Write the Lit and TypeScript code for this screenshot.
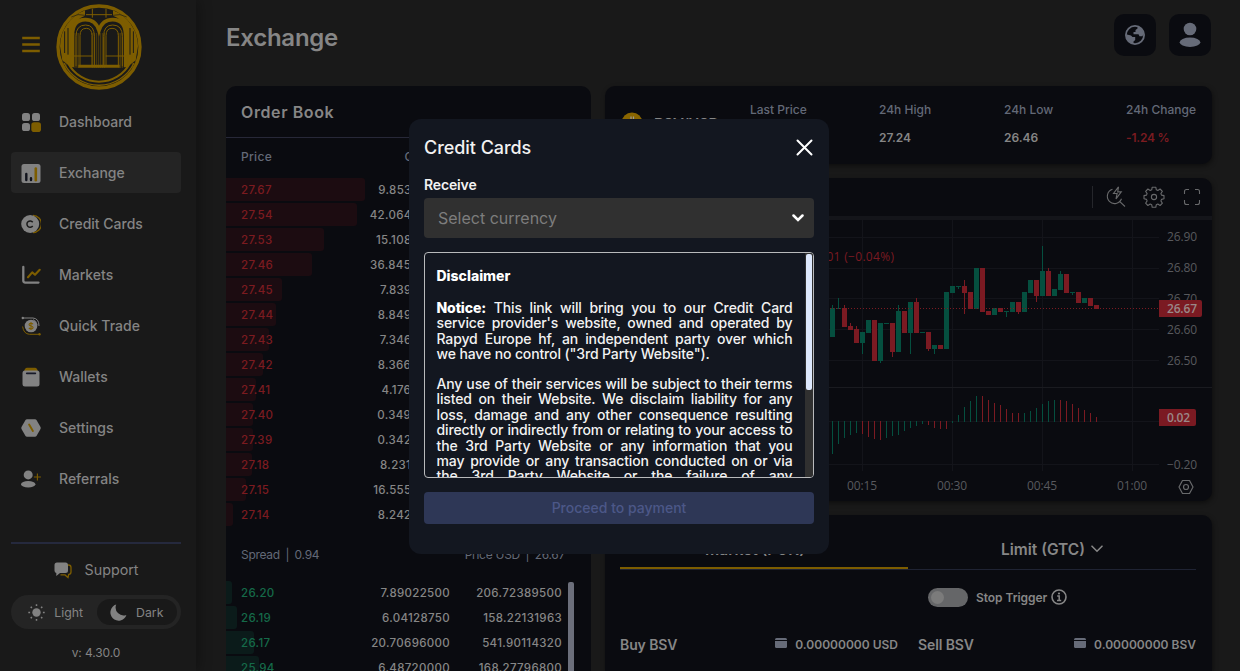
import { LitElement, html, svg, css } from "lit";
import { customElement, property } from "lit/decorators.js";

type Candle = [string, number, number, number?, number?];

const CANDLES: Candle[] = [
  ["g", 308, 337, 305], ["g", 308, 309, 298], ["r", 308, 327, 305], ["r", 326, 330, 323],
  ["r", 329, 343, 326], ["g", 332, 343, 332, 354], ["g", 320, 333], ["r", 320, 361],
  ["g", 323, 361, 323, 363], ["g", 323, 324], ["r", 323, 352, 323, 357], ["g", 311, 352, 305],
  ["r", 311, 333], ["g", 302, 333, 302, 354], ["r", 302, 333, 298], ["g", 332, 333],
  ["r", 332, 349, 332, 351], ["g", 345, 349, 345, 354], ["r", 345, 349], ["g", 292, 349],
  ["g", 286, 293], ["g", 286, 287, 286, 289], ["r", 286, 293, 280, 314], ["r", 292, 309],
  ["g", 268, 309], ["r", 268, 312], ["r", 311, 315], ["g", 308, 315], ["r", 308, 312],
  ["g", 311, 312, 311, 317], ["g", 302, 312], ["r", 302, 312, 302, 314], ["g", 292, 312],
  ["g", 280, 293], ["r", 280, 296, 280, 302], ["g", 271, 296, 246], ["r", 271, 296, 268],
  ["g", 289, 296], ["g", 274, 290, 271], ["r", 274, 293], ["g", 292, 293, 292, 295],
  ["r", 292, 303], ["g", 298, 303], ["r", 298, 306], ["r", 305, 309],
];

const HISTOGRAM: [string, number][] = [
  ["g", 454], ["g", 444], ["g", 438], ["g", 435], ["g", 433], ["r", 434], ["r", 437], ["r", 439],
  ["r", 440], ["g", 438], ["g", 436], ["g", 435], ["g", 431], ["g", 428], ["g", 426], ["g", 424],
  ["r", 425], ["r", 428], ["r", 429], ["r", 429], ["g", 423], ["g", 415], ["g", 407], ["g", 401],
  ["g", 396], ["r", 396], ["r", 400], ["r", 403], ["r", 405], ["r", 409], ["r", 413], ["r", 413],
  ["g", 413], ["g", 411], ["g", 408], ["g", 404], ["g", 401], ["g", 400], ["r", 400], ["r", 401],
  ["r", 404], ["r", 408], ["r", 410], ["r", 413], ["r", 417],
];

const INK: Record<string, string> = { g: "#054f3f", r: "#7b1a22" };

const ASKS: [string, string, number][] = [
  ["27.67", "9.85320000", 139], ["27.54", "42.06450000", 131], ["27.53", "15.10860000", 98],
  ["27.46", "36.84540000", 86], ["27.45", "7.83920000", 56], ["27.44", "8.84960000", 50],
  ["27.43", "7.34620000", 43], ["27.42", "8.36640000", 37], ["27.41", "4.17640000", 30],
  ["27.40", "0.34940000", 27], ["27.39", "0.34240000", 27], ["27.18", "8.23140000", 26],
  ["27.15", "16.55560000", 20], ["27.14", "8.24260000", 7],
];

const BIDS: [string, string, string, number][] = [
  ["26.20", "7.89022500", "206.72389500", 6], ["26.19", "6.04128750", "158.22131963", 11],
  ["26.17", "20.70696000", "541.90114320", 28], ["25.94", "6.48720000", "168.27796800", 33],
];

const G = "#828282";
const Y = "#7d5d00";

const MENU_ICONS = {
  Dashboard: svg`<rect x="1" y="1" width="8" height="8" rx="2.6" fill=${G}/><rect x="11" y="1" width="8" height="8" rx="2.6" fill=${G}/><rect x="1" y="11" width="8" height="8" rx="2.6" fill=${G}/><rect x="10.3" y="10.3" width="9.7" height="9.7" rx="2.8" fill=${Y}/>`,
  Exchange: svg`<rect x=".5" y="1" width="19" height="19" rx="2.5" fill=${G}/><path d="M5.3 11v6M10 15.2V17" stroke="#11131c" stroke-width="2.4" stroke-linecap="round"/><path d="M14.8 5.5V17.2" stroke=${Y} stroke-width="2.6" stroke-linecap="round"/>`,
  "Credit Cards": svg`<path d="M12 1.5a8.3 8.3 0 0 1 0 17" fill="none" stroke=${Y} stroke-width="1.3"/><circle cx="9.2" cy="10" r="9" fill=${G}/><path d="M11.7 8.2A3.2 3.2 0 1 0 11.7 12" fill="none" stroke="#191919" stroke-width="1.5"/>`,
  Markets: svg`<path d="M2.3 2V15.6q0 2 2 2H17.5" fill="none" stroke=${G} stroke-width="2.3" stroke-linecap="round"/><path d="M7 12.3 11.2 7.4 14 9.8 18.7 4.8" fill="none" stroke=${Y} stroke-width="2.1" stroke-linecap="round" stroke-linejoin="round"/>`,
  "Quick Trade": svg`<path d="M1 2h11q6 .5 6 8" fill="none" stroke=${G} stroke-width="1"/><circle cx="1.8" cy="2" r="1.2" fill=${G}/><path d="M12 3.5q4 1.5 4 5.5" fill="none" stroke=${G} stroke-width=".8"/><path d="M1.6 10.5q1 7.5 7 7.8h10" fill="none" stroke=${Y} stroke-width="1"/><circle cx="18.5" cy="18.3" r="1.2" fill=${Y}/><circle cx="10" cy="10" r="6.3" fill=${G}/><path d="M12 8.2q-.6-1-2-1-2 0-2 1.4 0 1.2 2 1.4 2.1.2 2.1 1.5 0 1.4-2.1 1.4-1.5 0-2.1-1M10 6v8" fill="none" stroke=${Y} stroke-width="1.1"/>`,
  Wallets: svg`<path d="M3.2 4.2Q3.8.7 6 .7h8q2.200 0 2.800 3.500z" fill=${Y}/><rect x="1.500" y="3.500" width="17" height="16" rx="2.500" fill=${G}/><path d="M5.800 6.300h8.500" stroke="#171927" stroke-width="1.800" stroke-linecap="round"/>`,
  Settings: svg`<path d="M6 1.300h8q1 0 1.500.8l4 7q.5.9 0 1.800l-4 7q-.5.800-1.500.800H6q-1 0-1.500-.800l-4-7q-.5-.9 0-1.800l4-7Q5 1.300 6 1.300z" fill=${G}/><path d="M8.100 6.500 11.900 13" stroke=${Y} stroke-width="1.900" stroke-linecap="round"/>`,
  Referrals: svg`<circle cx="7.200" cy="5.900" r="4.500" fill=${G}/><ellipse cx="7.200" cy="15.300" rx="7.200" ry="3.200" fill=${G}/><path d="M12.900 8h7M16.400 4.500v7" stroke=${Y} stroke-width="1.100"/>`,
};

@customElement("side-menu")
class SideMenu extends LitElement {
  @property() active = "Exchange";

  static styles = css`
    :host { display: flex; flex-direction: column; box-sizing: border-box; width: 196px; height: 671px; padding: 0 15px 0 11px; background: #191919; box-shadow: 3px 0 12px rgba(0, 0, 0, 0.3); z-index: 1; color: #848484; }
    .brand { display: flex; align-items: center; gap: 14.500px; height: 97px; padding-left: 10px; box-sizing: border-box; }
    .burger { display: block; width: 20px; height: 18px; margin-top: -7px; }
    .logo { display: block; margin-top: -3px; }
    .items { display: flex; flex-direction: column; gap: 10px; padding-top: 4px; }
    .item { display: flex; align-items: center; gap: 18px; height: 41px; padding-left: 10px; border-radius: 4px; font-size: 14px; font-weight: 500; letter-spacing: 0; }
    .item svg { flex: none; }
    .on { background: #242424; }
    .rule { height: 2px; margin-top: 43px; background: #25293d; }
    .support { display: flex; align-items: center; justify-content: center; gap: 13px; height: 50px; font-size: 14.300px; padding-top: 1px; line-height: 18px; }
    .modes { display: flex; align-items: center; height: 34px; border-radius: 17px; background: #242424; font-size: 12.300px; box-sizing: border-box; padding: 4px; }
    .mode { display: flex; align-items: center; justify-content: center; gap: 9px; height: 26px; width: 82px; border-radius: 13px; }
    .picked { background: #191919; width: 81px; }
    .version { text-align: center; font-size: 12px; margin-top: 16px; letter-spacing: -0.1px; }
  `;

  render() {
    const stripes = [187, 196, 223, 229, 234, 275, 281, 287, 293, 299, 305, 311, 355, 360, 365, 395, 404];
    return html`
      <div class="brand">
        <svg class="burger" viewBox="0 0 20 18"><path d="M2.500 2h15M2.500 8.500h15M2.500 15h15" stroke=${Y} stroke-width="2.600" stroke-linecap="square"/></svg>
        <svg class="logo" width="86" height="86" viewBox="166 13 258 258" fill="none" stroke=${Y}>
          <path d="M253 32a117 117 0 0 0-75 108l7 42 28 22V100q4-40 40-52z" fill=${Y} stroke="none"/>
          <path d="M337 32a117 117 0 0 1 75 108l-7 42-28 22V100q-4-40-40-52z" fill=${Y} stroke="none"/>
          <path d="M192 95v65M202 85v80M398 95v65M388 85v80" stroke="#191919" stroke-width="3"/>
          <circle cx="295" cy="142" r="123" stroke-width="10"/>
          <path d="M190 190a116 116 0 0 0 210 0" stroke-width="4"/>
          <path d="M202 190a105 105 0 0 0 186 0" stroke-width="6"/>
          <path d="M212 52q40-24 83 28 43-52 83-28" stroke="#191919" stroke-width="2"/>
          <path d="M215 203V108q0-48 39-48 31 0 41 32 10-32 41-32 39 0 39 48v95" stroke-width="11"/>
          <path d="M226 200v-90q0-34 29-34 26 0 26 34v90M309 200v-90q0-34 27-34 29 0 29 34v90" stroke-width="3"/>
          <path d="M238 200v-92q0-22 19-22 17 0 17 22v92M316 200v-92q0-22 18-22 19 0 19 22v92" stroke-width="3"/>
          ${stripes.map((x) => svg`<path d="M${x} ${x < 210 || x > 380 ? 90 : 100}V205" stroke-width="1.600"/>`)}
          <path d="M208 169h67M315 169h75" stroke-width="3"/>
          <path d="M233 200h124" stroke-width="9"/>
          <path d="M275 27v27M316 27v27M256 45h78" stroke-width="3"/>
        </svg>
      </div>
      <div class="items">
        ${Object.entries(MENU_ICONS).map(([name, icon]) => html`
          <div class="item ${name === this.active ? "on" : ""}"><svg width="20" height="20" viewBox="0 0 20 20">${icon}</svg>${name}</div>`)}
      </div>
      <div class="rule"></div>
      <div class="support">
        <svg width="18" height="17" viewBox="0 0 18 17"><path d="M13.500 3h1q2.500 0 2.500 2.500v4.500q0 2.300-2.300 2.500l-.7 3-3-2.600H6.500" fill="none" stroke=${Y} stroke-width="1.300"/><path d="M3 .5h8.500Q14 .5 14 3v5.500Q14 11 11.500 11H6l-3.700 3V11Q.5 10.700.5 8.500V3Q.5.5 3 .5z" fill=${G}/></svg>
        Support
      </div>
      <div class="modes">
        <div class="mode"><svg width="17" height="17" viewBox="0 0 17 17"><circle cx="8.500" cy="8.500" r="4.200" fill=${G}/><path d="M8.500.3v1.800M8.500 14.900v1.800M.3 8.500h1.800M14.900 8.500h1.800M2.700 2.700l1.200 1.200M13.100 13.100l1.200 1.200M2.700 14.300l1.200-1.200M13.100 3.900l1.200-1.200" stroke=${G} stroke-width="1.500"/></svg>Light</div>
        <div class="mode picked"><svg width="17" height="17" viewBox="0 0 17 17"><path d="M6.200.6A8.200 8.200 0 1 0 16.400 11 8 8 0 0 1 6.200.6z" fill=${G}/></svg>Dark</div>
      </div>
      <div class="version">v: 4.30.0</div>`;
  }
}

@customElement("order-book")
class OrderBook extends LitElement {
  static styles = css`
    :host { display: block; width: 365px; height: 585px; overflow: hidden; border-radius: 10px 10px 0 0; background: #0a0b10; color: #868686; }
    .title { height: 51px; line-height: 53px; padding-left: 15px; border-bottom: 1px solid #272838; font-size: 16px; font-weight: 600; letter-spacing: 0.6px; }
    .cols, .row { display: grid; grid-template-columns: 139px 85px 112px; padding-left: 0; }
    .cols { height: 40px; line-height: 38px; font-size: 12px; font-weight: 500; letter-spacing: 0.3px; color: #636977; }
    .cols span:first-child { padding-left: 15px; }
    .cols .num { letter-spacing: -0.4px; }
    .num { text-align: right; }
    .row { height: 25px; font-size: 11.500px; font-weight: 500; letter-spacing: 0.32px; line-height: 24px; }
    .bar, .price { grid-area: 1 / 1; }
    .bar { height: 23px; border-radius: 0 3px 3px 0; background: #1c0c11; }
    .buy { line-height: 25px; }
    .buy .bar { background: #0b1b1a; }
    .price { padding-left: 15px; color: #7b1b20; }
    .buy .price { color: #156a49; }
    .spread { display: flex; justify-content: space-between; height: 53px; line-height: 54px; padding: 0 26px 0 15px; font-size: 12px; letter-spacing: -0.28px; color: #636977; }
    .sep { padding: 0 5.500px; }
    .bids { display: flex; justify-content: space-between; padding-right: 17px; }
    .thumb { width: 6px; height: 100px; margin-top: 1px; border-radius: 2px; background: #6c6f7b; }
  `;

  render() {
    return html`
      <div class="title">Order Book</div>
      <div class="cols"><span>Price</span><span class="num">Quantity</span><span class="num">Total</span></div>
      ${ASKS.map(([p, a, w]) => html`<div class="row"><span class="bar" style="width:${w}px"></span><span class="price">${p}</span><span class="num">${a}</span></div>`)}
      <div class="spread"><span>Spread<span class="sep">|</span>0.94</span><span>Price USD<span class="sep">|</span>26.67</span></div>
      <div class="bids"><div>
        ${BIDS.map(([p, a, t, w]) => html`<div class="row buy"><span class="bar" style="width:${w}px"></span><span class="price">${p}</span><span class="num">${a}</span><span class="num">${t}</span></div>`)}
      </div><div class="thumb"></div></div>`;
  }
}

@customElement("price-chart")
class PriceChart extends LitElement {
  static styles = css`
    :host { display: flex; flex-direction: column; height: 323px; border-radius: 10px; overflow: hidden; background: #0a0b10; box-shadow: 1px 2px 5px rgba(0, 0, 0, 0.45); }
    .tools { display: flex; align-items: center; justify-content: flex-end; height: 38px; padding-right: 11px; border-bottom: 4px solid #14151a; }
    .divider { width: 1px; height: 22px; background: #25262b; margin-right: 12px; }
    .tools svg { display: block; fill: none; stroke: #68696b; stroke-width: 1.100; }
    .search { margin-right: 16px; }
    .gear { margin-right: 18px; }
    .plot { display: block; font-family: "Open Sans", "Noto Sans", sans-serif; font-size: 12px; }
  `;

  render() {
    const x = (i: number) => 830 + i * 6;
    return html`
      <div class="tools">
        <div class="divider"></div>
        <svg class="search" width="22" height="22" viewBox="0 0 22 22"><path d="M7.500 3.300a7.300 7.300 0 1 0 9 9.500M14.300 15.200 20 20.500M13.500.8 8.500 7.500h3.600L11 12.800l5.300-6.900h-3.600z"/></svg>
        <svg class="gear" width="22" height="22" viewBox="0 0 22 22"><circle cx="11" cy="11" r="2.600"/><path d="M9.200 1.200h3.600l.5 2.600 1.500.7 2.300-1.500 2.300 2.300-1.500 2.300.6 1.500 2.500.5v3.200l-2.500.6-.6 1.500 1.500 2.300-2.300 2.300-2.300-1.500-1.500.7-.5 2.600H9.200l-.5-2.600-1.500-.7-2.300 1.500-2.300-2.300 1.500-2.300-.6-1.500-2.500-.6V9.600l2.500-.5.6-1.500-1.500-2.300 2.300-2.300 2.300 1.500 1.500-.7z" stroke-linejoin="round"/></svg>
        <svg width="18" height="18" viewBox="0 0 18 18"><path d="M1.500 6V3.500q0-2 2-2H6M12 1.500h2.500q2 0 2 2V6M16.500 12v2.500q0 2-2 2H12M6 16.500H3.500q-2 0-2-2V12"/></svg>
      </div>
      <svg class="plot" width="607" height="281" viewBox="605 220 607 281">
        <path d="M862.500 220V471M952.500 220V471M1042.500 220V471M1132.500 220V471M605 237.500H1159M605 268.500H1159M605 298.500H1159M605 329.500H1159M605 360.500H1159M605 421.500H1159M605 464.500H1159" stroke="#13141a"/>
        <path d="M605 387.500H1212" stroke="#1a1b20"/>
        <text x="773" y="261" fill=${INK.r} textLength="121">26.67 −0.01 (−0.04%)</text>
        ${CANDLES.map(([c, top, bottom, wt, wb], i) => svg`<rect x=${x(i)} y=${top} width="5" height=${bottom - top} fill=${INK[c]}/><rect x=${x(i) + 2} y=${wt ?? top} width="1" height=${(wb ?? bottom) - (wt ?? top)} fill=${INK[c]}/>`)}
        ${HISTOGRAM.map(([c, y], i) => svg`<rect x=${x(i) + 2} y=${i < 21 ? 421 : y} width="1" height=${i < 21 ? y - 421 : 422 - y} fill=${INK[c]}/>`)}
        <path d="M605 308.500H1159" stroke=${INK.r} stroke-dasharray="1 2"/>
        <g fill="#58595d">
          ${[["26.90", 241], ["26.80", 272], ["26.70", 303], ["26.60", 334], ["26.50", 365]].map(([t, y]) => svg`<text x="1167" y=${y} textLength="30">${t}</text>`)}
          <text x="1167" y="469" textLength="30">−0.20</text>
          ${[["00:15", 847], ["00:30", 937], ["00:45", 1027], ["01:00", 1117]].map(([t, tx]) => svg`<text x=${tx} y="490" textLength="30">${t}</text>`)}
        </g>
        <path d="M1159 300h41q2 0 2 2v13q0 2-2 2h-41zM1159 409h35q2 0 2 2v13q0 2-2 2h-35z" fill="#7b1a22"/>
        <g fill="#9a8888" font-weight="600"><text x="1167" y="313" textLength="30">26.67</text><text x="1167" y="422" textLength="23">0.02</text></g>
        <path d="M1182.500 480.500h7l3.500 6.500-3.500 6.500h-7l-3.500-6.500zM1183.500 487a2.500 2.500 0 1 0 5 0a2.500 2.500 0 1 0-5 0" fill="none" stroke="#68696b" stroke-width="1.200" stroke-linejoin="round"/>
      </svg>`;
  }
}

@customElement("trade-panel")
class TradePanel extends LitElement {
  static styles = css`
    :host { display: block; box-sizing: border-box; height: 156px; padding: 0 16px 0 15px; border-radius: 10px 10px 0 0; overflow: hidden; background: #0a0b10; color: #868686; box-shadow: 1px 2px 5px rgba(0, 0, 0, 0.45); }
    .tabs { display: grid; grid-template-columns: 288px 288px; height: 54px; border-bottom: 1px solid #1f2333; font-size: 15.500px; font-weight: 600; }
    .tab { display: flex; align-items: center; justify-content: center; gap: 6px; padding-top: 14px; }
    .chosen { border-bottom: 2px solid #7d5d00; height: 35px; padding-top: 17px; }
    .trigger { display: flex; align-items: center; height: 54px; padding-left: 308px; font-size: 12px; font-weight: 600; letter-spacing: -0.05px; }
    .toggle { display: flex; align-items: center; box-sizing: border-box; width: 40px; height: 19px; padding-left: 3px; margin-right: 8px; border-radius: 10px; background: #656668; }
    .knob { width: 13px; height: 13px; border-radius: 50%; background: #7b7b7b; }
    .info { margin-left: 4px; }
    .sides { display: grid; grid-template-columns: 278px 278px; gap: 20px; font-size: 14px; font-weight: 600; letter-spacing: -0.1px; padding-top: 12px; }
    .side { display: flex; justify-content: space-between; align-items: center; height: 17px; }
    .funds { display: flex; align-items: center; gap: 8px; font-size: 12px; letter-spacing: 0; }
    .funds svg { margin-top: -4px; }
  `;

  side(name: string, unit: string) {
    return html`<div class="side"><span>${name} BSV</span><span class="funds"><svg width="12" height="10" viewBox="0 0 12 10"><rect width="12" height="10" rx="1.500" fill="#666b78"/><path d="M0 2.500h12" stroke="#0a0b10" stroke-width="1.200"/></svg>0.00000000 ${unit}</span></div>`;
  }

  render() {
    const chevron = html`<svg width="12" height="8" viewBox="0 0 12 8"><path d="M1 1.200l5 5 5-5" fill="none" stroke="#868686" stroke-width="1.600" stroke-linecap="round"/></svg>`;
    return html`
      <div class="tabs">
        <div class="tab chosen">Market (FOK)${chevron}</div>
        <div class="tab">Limit (GTC)${chevron}</div>
      </div>
      <div class="trigger">
        <div class="toggle"><div class="knob"></div></div>Stop Trigger
        <svg class="info" width="16" height="16" viewBox="0 0 16 16"><circle cx="8" cy="8" r="7" fill="none" stroke="#868686" stroke-width="1.600"/><path d="M6.200 7h2v4.200M6 11.500h4.200" fill="none" stroke="#868686" stroke-width="1.500"/><circle cx="8" cy="4.500" r="1.100" fill="#868686"/></svg>
      </div>
      <div class="sides">${this.side("Buy", "USD")}${this.side("Sell", "BSV")}</div>`;
  }
}

@customElement("card-dialog")
class CardDialog extends LitElement {
  static styles = css`
    :host { position: absolute; left: 409px; top: 119px; z-index: 2; display: flex; flex-direction: column; box-sizing: border-box; width: 420px; height: 435px; padding: 0 15px; border-radius: 12px; background: #131720; color: #f2f2f2; }
    .head { display: flex; justify-content: space-between; align-items: center; height: 57px; font-size: 18px; font-weight: 500; letter-spacing: -0.05px; padding-right: 1.500px; }
    .label { font-size: 14px; font-weight: 600; line-height: 18px; height: 22px; letter-spacing: -0.15px; }
    .select { display: flex; align-items: center; justify-content: space-between; height: 40px; padding: 0 10px 0 14px; border-radius: 4px; background: #303030; color: #7d7d7d; font-size: 16px; }
    .terms { display: flex; box-sizing: border-box; height: 226px; margin-top: 14px; border: 1px solid #b9babc; border-radius: 4px; overflow: hidden; }
    .copy { width: 356px; margin-left: 11.500px; padding-top: 15px; font-size: 14px; line-height: 15.400px; text-align: justify; font-weight: 500; letter-spacing: -0.13px; }
    .copy p { margin: 0 0 14.500px; }
    .copy .lead { margin-bottom: 16.500px; letter-spacing: 0; }
    .lead, b { font-weight: 800; color: #fff; }
    .track { width: 8px; margin-left: auto; background: #303030; padding: 1px 1px 0; box-sizing: border-box; }
    .thumb { height: 136px; border-radius: 2px; background: #dde8fd; }
    .pay { margin-top: 14px; height: 32px; line-height: 32px; border-radius: 4px; text-align: center; background: #2e3756; color: #4c5788; font-size: 14px; font-weight: 500; }
  `;

  render() {
    return html`
      <div class="head">Credit Cards<svg width="17" height="17" viewBox="0 0 17 17"><path d="M1.500 1.500l14 14M15.500 1.500l-14 14" stroke="#fff" stroke-width="2" stroke-linecap="round"/></svg></div>
      <div class="label">Receive</div>
      <div class="select">Select currency<svg width="12" height="8" viewBox="0 0 12 8"><path d="M1.500 1.500 6 6l4.500-4.500" fill="none" stroke="#fff" stroke-width="2.500" stroke-linecap="round"/></svg></div>
      <div class="terms">
        <div class="copy">
          <p class="lead">Disclaimer</p>
          <p><b>Notice:</b> This link will bring you to our Credit Card service provider's website, owned and operated by Rapyd Europe hf, an independent party over which we&nbsp;have no control ("3rd Party Website").</p>
          <p>Any use of their services will be subject to their terms listed on their Website. We disclaim liability for any loss, damage and any other consequence resulting directly or indirectly from or relating to your access to the 3rd Party Website or any information that you may&nbsp;provide or any transaction conducted on or via the&nbsp;3rd&nbsp;Party Website or the failure of any telecommunications.</p>
        </div>
        <div class="track"><div class="thumb"></div></div>
      </div>
      <div class="pay">Proceed to payment</div>`;
  }
}

@customElement("app-root")
class AppRoot extends LitElement {
  static styles = css`
    :host { display: flex; position: relative; width: 1240px; height: 671px; overflow: hidden; background: #191919; font-family: Inter, sans-serif; color: #868686; }
    .main { flex: 1; padding: 0 28px 0 30px; }
    .top { display: flex; align-items: center; height: 86px; box-sizing: border-box; padding: 0 1px 16px 0; gap: 13px; }
    .heading { flex: 1; font-size: 24px; font-weight: 600; letter-spacing: -0.25px; padding-top: 5px; }
    .tile { display: flex; align-items: center; justify-content: center; width: 42px; height: 42px; border-radius: 10px; background: #0a0b10; }
    .board { display: grid; grid-template-columns: 365px 607px; gap: 14px; }
    .stack { display: flex; flex-direction: column; gap: 14px; }
    .ticker { display: grid; grid-template-columns: 130px 129px 125px 122px 75px; box-sizing: border-box; height: 78px; padding: 16px 0 0 15px; border-radius: 10px; background: #0a0b10; font-size: 12px; box-shadow: 1px 2px 5px rgba(0, 0, 0, 0.45); }
    .pair { display: flex; align-items: center; gap: 11px; height: 42px; padding-left: 1px; font-size: 15px; font-weight: 600; letter-spacing: -0.3px; }
    .stat { display: flex; flex-direction: column; gap: 12px; line-height: 16px; white-space: nowrap; }
    .stat span:first-child { color: #636977; font-weight: 500; }
    .stat span:last-child { font-weight: 600; }
    .stat .down { color: #7b1b20; letter-spacing: -0.2px; }
  `;

  render() {
    return html`
      <side-menu></side-menu>
      <div class="main">
        <div class="top">
          <div class="heading">Exchange</div>
          <div class="tile"><svg width="20" height="20" viewBox="0 0 20 20"><circle cx="10" cy="10" r="9.100" fill="none" stroke="#666b78" stroke-width="1.800"/><path d="M1 9.200 6 10.500 7.500 12h2.700v3L8.500 16.500V19Q1.500 18 1 9.200zM12.500 1v2.500L10.500 5v2H8.500v2.300h5l1 2h3l.7-1.800Q18.500 3 12.500 1z" fill="#666b78"/></svg></div>
          <div class="tile"><svg width="22" height="26" viewBox="0 0 22 26"><circle cx="11" cy="7" r="6.300" fill="#666b78"/><ellipse cx="11" cy="20.200" rx="10.300" ry="4.700" fill="#666b78"/></svg></div>
        </div>
        <div class="board">
          <order-book></order-book>
          <div class="stack">
            <div class="ticker">
              <div class="pair"><svg width="22" height="22" viewBox="0 0 22 22"><circle cx="11" cy="11" r="10.500" fill="#8a6600"/><path d="M8 7.500h4q3 0 3 2T12 12H8zM8 12h4.500q3 0 3 2.500T12.500 17H8M10 4.500v3M12.500 4.500v3" fill="none" stroke="#999" stroke-width="1.200"/></svg>BSV/USD</div>
              <div class="stat"><span>Last Price</span><span>26.67</span></div>
              <div class="stat"><span>24h High</span><span>27.24</span></div>
              <div class="stat"><span>24h Low</span><span>26.46</span></div>
              <div class="stat"><span>24h Change</span><span class="down">-1.24 %</span></div>
            </div>
            <price-chart></price-chart>
            <trade-panel></trade-panel>
          </div>
        </div>
      </div>
      <card-dialog></card-dialog>`;
  }
}
